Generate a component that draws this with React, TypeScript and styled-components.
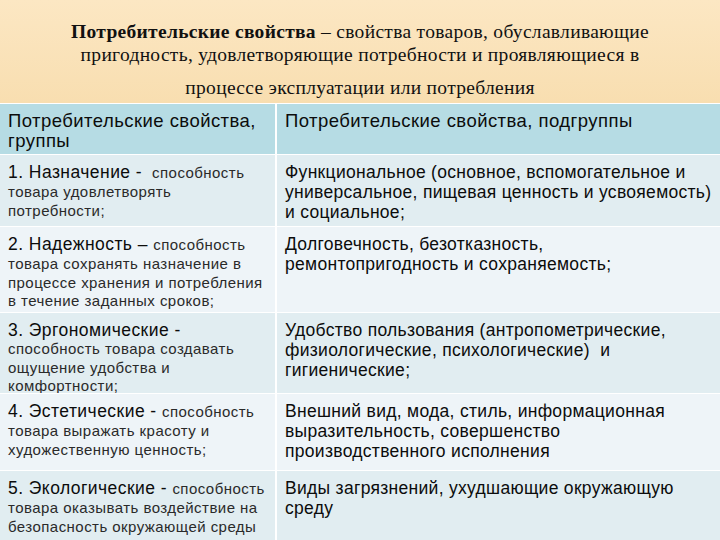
import React from 'react'
import styled, { createGlobalStyle } from 'styled-components'

const GlobalStyle = createGlobalStyle`
  html, body {
    margin: 0;
    padding: 0;
    background: #ffffff;
  }
  body {
    width: 720px;
    height: 540px;
    overflow: hidden;
  }
`

const Slide = styled.div`
  width: 720px;
  height: 540px;
  display: flex;
  flex-direction: column;
  background: #f1f6f9;
`

const TitleBox = styled.div`
  height: 103px;
  box-sizing: border-box;
  padding-top: 20px;
  background: linear-gradient(180deg, #fce7c3 0%, #f8deb0 100%);
  font-family: 'Liberation Serif', 'Times New Roman', serif;
  font-size: 19.5px;
  letter-spacing: 0.3px;
  color: #111;
  text-align: center;
  white-space: nowrap;
`

const TitleLines = styled.div`
  line-height: 23px;
`

const TitleLast = styled.div`
  margin-top: 10px;
  line-height: 23px;
`

const Grid = styled.div`
  flex: 1;
  display: grid;
  grid-template-columns: 275px 1fr;
  grid-template-rows: 50px 71px 85px 80px 76px 1fr;
  gap: 1px 2px;
  background: #ffffff;
  padding-top: 1px;
  font-family: 'Liberation Sans', Arial, sans-serif;
  color: #0c0c0c;
`

const Cell = styled.div<{ $tone: 'head' | 'odd' | 'even' }>`
  box-sizing: border-box;
  padding: 7px 8px 0 8px;
  background: ${(p) => (p.$tone === 'head' ? '#b6dce4' : p.$tone === 'odd' ? '#e1edf1' : '#eef4f8')};
  font-size: ${(p) => (p.$tone === 'head' ? '18.5px' : '17.5px')};
  letter-spacing: ${(p) => (p.$tone === 'head' ? '0.45px' : '0.3px')};
  line-height: 20px;
  overflow: hidden;
  white-space: pre;
`

const Lead = styled.div`
  font-size: 17.5px;
  letter-spacing: 0.45px;
  line-height: 20px;
`

const Note = styled.span`
  font-size: 15px;
  letter-spacing: 0.45px;
  color: #2a2a2a;
`

const Desc = styled.div`
  font-size: 15px;
  letter-spacing: 0.45px;
  line-height: 18.5px;
  color: #2a2a2a;
`

const Line = styled.div``

type Row = {
  lead: string
  first: string
  rest: string[]
  right: string[]
}

const rows: Row[] = [
  {
    lead: '1. Назначение - ',
    first: ' способность',
    rest: ['товара удовлетворять', 'потребности;'],
    right: [
      'Функциональное (основное, вспомогательное и',
      'универсальное, пищевая ценность и усвояемость)',
      'и социальное;',
    ],
  },
  {
    lead: '2. Надежность – ',
    first: 'способность',
    rest: ['товара сохранять назначение в', 'процессе хранения и потребления', 'в течение заданных сроков;'],
    right: ['Долговечность, безотказность,', 'ремонтопригодность и сохраняемость;'],
  },
  {
    lead: '3. Эргономические - ',
    first: '',
    rest: ['способность товара создавать', 'ощущение удобства и', 'комфортности;'],
    right: [
      'Удобство пользования (антропометрические,',
      'физиологические, психологические)  и',
      'гигиенические;',
    ],
  },
  {
    lead: '4. Эстетические - ',
    first: 'способность',
    rest: ['товара выражать красоту и', 'художественную ценность;'],
    right: ['Внешний вид, мода, стиль, информационная', 'выразительность, совершенство', 'производственного исполнения'],
  },
  {
    lead: '5. Экологические - ',
    first: 'способность',
    rest: ['товара оказывать воздействие на', 'безопасность окружающей среды'],
    right: ['Виды загрязнений, ухудшающие окружающую', 'среду'],
  },
]

export default function App() {
  return (
    <>
      <GlobalStyle />
      <Slide>
        <TitleBox>
          <TitleLines>
            <b>Потребительские свойства</b> – свойства товаров, обуславливающие
            <br />
            пригодность, удовлетворяющие потребности и проявляющиеся в
          </TitleLines>
          <TitleLast>процессе эксплуатации или потребления</TitleLast>
        </TitleBox>
        <Grid>
          <Cell $tone="head">
            <Line>Потребительские свойства,</Line>
            <Line>группы</Line>
          </Cell>
          <Cell $tone="head">
            <Line>Потребительские свойства, подгруппы</Line>
          </Cell>
          {rows.map((r, i) => {
            const tone = i % 2 === 0 ? 'odd' : 'even'
            return (
              <React.Fragment key={r.lead}>
                <Cell $tone={tone}>
                  <Lead>
                    {r.lead}
                    {r.first && <Note>{r.first}</Note>}
                  </Lead>
                  {r.rest.map((line) => (
                    <Desc key={line}>{line}</Desc>
                  ))}
                </Cell>
                <Cell $tone={tone}>
                  {r.right.map((line) => (
                    <Line key={line}>{line}</Line>
                  ))}
                </Cell>
              </React.Fragment>
            )
          })}
        </Grid>
      </Slide>
    </>
  )
}
